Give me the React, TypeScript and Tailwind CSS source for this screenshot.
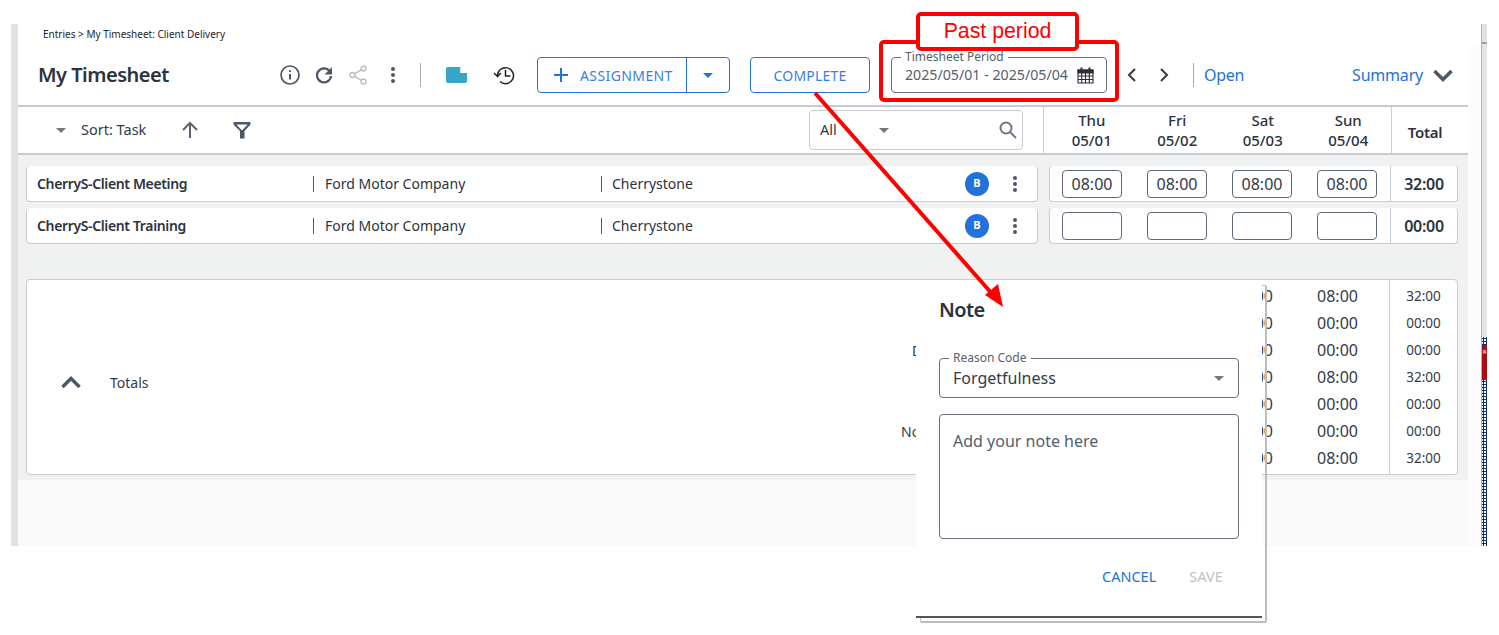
const F = "[font-family:'Noto_Sans','Open_Sans',sans-serif]";
function Dots({ c = "bg-[#4d5866]" }: { c?: string }) {
  return (
    <div className="flex flex-col items-center gap-[2px]">
      <span className={`h-[4px] w-[4px] rounded-full ${c}`} />
      <span className={`h-[4px] w-[4px] rounded-full ${c}`} />
      <span className={`h-[4px] w-[4px] rounded-full ${c}`} />
    </div>
  );
}
function Caret({ c = "#777" }: { c?: string }) {
  return (
    <svg width="10" height="5" viewBox="0 0 10 5"><path d="M0 0h10L5 5z" fill={c} /></svg>
  );
}
const days = [["Thu", "05/01"], ["Fri", "05/02"], ["Sat", "05/03"], ["Sun", "05/04"]];
function Row({ name, vals, total }: { name: string; vals: string[]; total: string }) {
  return (
    <div className="flex h-[36px] items-stretch pl-[8px] pr-[10px]">
      <div className="flex w-[1012px] items-center rounded-[4px] border-b border-r border-l border-[#c8ccd3] bg-white pl-[10px] text-[14px] text-[#2c3340]">
        <div className="w-[276px] font-semibold tracking-[-0.36px]">{name}</div>
        <div className="w-[288px] border-l border-[#555] pl-[11px] leading-[16px]">Ford Motor Company</div>
        <div className="flex-1 border-l border-[#555] pl-[10px] leading-[16px]">Cherrystone</div>
        <span className="flex h-[24px] w-[24px] items-center justify-center rounded-full bg-[#2272d9] text-[11px] font-bold text-white">B</span>
        <div className="ml-[18px] mr-[14px] flex w-[16px] justify-center"><Dots /></div>
      </div>
      <div className="ml-[11px] flex w-[409px] rounded-[4px] border-b border-r border-l border-[#c8ccd3] bg-white">
        <div className="flex flex-1 items-center gap-[25px] pl-[12px]">
          {vals.map((v, i) => (
            <div key={i} className="flex h-[28px] w-[60px] items-center justify-center rounded-[4px] border border-[#5f6b7a] text-[16px] text-[#333b47]">{v}</div>
          ))}
        </div>
        <div className="flex w-[67px] items-center justify-center border-l border-[#c8ccd3] text-[16px] font-semibold tracking-[-0.3px] text-[#2c3340]">{total}</div>
      </div>
    </div>
  );
}
const labels = ["", "", "D", "", "", "No", ""];
const indent = ["", "", "pl-[11px]", "", "", "", ""];
const totals = [["08:00", "08:00", "32:00"], ["00:00", "00:00", "00:00"], ["00:00", "00:00", "00:00"], ["08:00", "08:00", "32:00"], ["00:00", "00:00", "00:00"], ["00:00", "00:00", "00:00"], ["08:00", "08:00", "32:00"]];
export default function App() {
  return (
    <div className={`relative h-[635px] w-[1499px] overflow-hidden bg-white ${F}`}>
      <div className="flex h-[546px] pl-[11px] pt-[24px]">
        <div className="w-[7px] shrink-0 bg-[#e1e1e1]" />
        <div className="flex w-[1450px] shrink-0 flex-col bg-[#fafafa]">
          <div className="bg-white">
            <div className="pl-[25px] pt-[4px] text-[10px] leading-[13px] text-[#1c2430]">Entries &gt; My Timesheet: Client Delivery</div>
            <div className="flex h-[66px] items-center border-b-2 border-[#c6cad2] pl-[20px] pt-[4px]">
              <div className="w-[242px] text-[20px] font-semibold tracking-[-0.5px] text-[#2c3340]">My Timesheet</div>
              <svg width="20" height="20" viewBox="0 0 20 20" fill="none" stroke="#4d5866" strokeWidth="1.7"><circle cx="10" cy="10" r="9" /><path d="M10 9v5.500M10 5.200v1.800" strokeWidth="2" /></svg>
              <svg className="ml-[15px]" width="18" height="18" viewBox="0 0 18 18" fill="none" stroke="#4d5866" strokeWidth="2.2"><path d="M14.500 5A7 7 0 1 0 16 10" /><path d="M17 1v7.500H9.500z" fill="#4d5866" stroke="none" /></svg>
              <svg className="ml-[16px]" width="18" height="20" viewBox="0 0 18 20" fill="none" stroke="#b9bcc0" strokeWidth="1.4"><circle cx="14.500" cy="3.500" r="2.500" /><circle cx="3.500" cy="10" r="2.500" /><circle cx="14.500" cy="16.500" r="2.500" /><path d="M12.500 4.700 5.500 8.800M5.500 11.200l7 4.100" /></svg>
              <div className="ml-[24px]"><Dots /></div>
              <div className="ml-[25px] h-[24px] w-px bg-[#a6adb8]" />
              <svg className="ml-[25px]" width="21" height="16" viewBox="0 0 21 16"><path d="M2 0h12.500v6H21v8a2 2 0 0 1-2 2H2a2 2 0 0 1-2-2V2a2 2 0 0 1 2-2z" fill="#36a6c8" /><path d="M14.500 6V0L21 6z" fill="#fff" /></svg>
              <svg className="ml-[26px]" width="22" height="20" viewBox="0 0 22 20" fill="none" stroke="#222" strokeWidth="1.5"><path d="M4.500 11A8 8 0 1 1 7 16.500" /><path d="M1 8l3.500 3.500L8 8" /><path d="M12.500 5v6h5" /></svg>
              <div className="ml-[22px] flex h-[36px] w-[193px] items-stretch rounded-[4px] border border-[#2272d9] text-[#2272d9]">
                <div className="flex w-[149px] items-center border-r border-[#2272d9] pl-[15px]">
                  <svg width="16" height="16" viewBox="0 0 16 16" stroke="#2272d9" strokeWidth="2"><path d="M8 1v14M1 8h14" /></svg>
                  <span className="ml-[11px] text-[14px] tracking-[0.4px] text-[#3b80de]">ASSIGNMENT</span>
                </div>
                <div className="flex flex-1 items-center justify-center"><Caret c="#2272d9" /></div>
              </div>
              <div className="ml-[20px] flex h-[36px] w-[120px] items-center justify-center rounded-[4px] border border-[#2272d9] text-[14px] tracking-[0.2px] text-[#3b80de]">COMPLETE</div>
              <div className="relative ml-[21px] flex h-[36px] w-[216px] items-center rounded-[4px] border border-[#67707d] pl-[13px] text-[14.2px] text-[#555e6b]">
                <span className="absolute left-[9px] top-[-9px] bg-white px-[4px] text-[12px] leading-[16px] text-[#555e6b]">Timesheet Period</span>
                2025/05/01 - 2025/05/04
                <svg className="absolute right-[12px] top-[9px]" width="17" height="17" viewBox="0 0 17 17" fill="none" stroke="#2b2f36" strokeWidth="1.1"><path d="M1 3h15v13H1z" /><path d="M1 3h15v3H1z" fill="#2b2f36" /><path d="M1 9h15M1 12.500h15M4.700 6v10M8.500 6v10M12.300 6v10" /><path d="M4.500 0.500v3.500M12.500 0.500v3.500" strokeWidth="2" /></svg>
              </div>
              <svg className="ml-[20px]" width="10" height="14" viewBox="0 0 10 14" fill="none" stroke="#333b47" strokeWidth="2"><path d="M8 1 2 7l6 6" /></svg>
              <svg className="ml-[22px]" width="10" height="14" viewBox="0 0 10 14" fill="none" stroke="#333b47" strokeWidth="2"><path d="M2 1l6 6-6 6" /></svg>
              <div className="ml-[24px] h-[24px] w-px bg-[#a6adb8]" />
              <div className="ml-[10px] text-[16px] tracking-[-0.3px] text-[#2272d9]">Open</div>
              <div className="ml-[108px] text-[16px] tracking-[-0.2px] text-[#2272d9]">Summary</div>
              <svg className="ml-[10px]" width="20" height="13" viewBox="0 0 20 13" fill="none" stroke="#4d5866" strokeWidth="3.500"><path d="M1.500 2 10 10.500 18.500 2" /></svg>
            </div>
            <div className="flex h-[48px] items-stretch border-b-2 border-[#c6cad2] pl-[38px]">
              <div className="flex w-[753px] items-center">
                <Caret c="#777" />
                <span className="ml-[15px] text-[14.5px] text-[#333b47]">Sort: Task</span>
                <svg className="ml-[35px]" width="18" height="18" viewBox="0 0 18 18" fill="none" stroke="#5a6675" strokeWidth="2"><path d="M9 17V2M2 9l7-7 7 7" /></svg>
                <svg className="ml-[34px]" width="18" height="18" viewBox="0 0 18 18" fill="#4d5866"><path d="M.5 1h17v2.500l-6 6.500v7.500H7V10L.5 3.500zM3.500 3.500 8.500 9h1L14.500 3.500z" fillRule="evenodd" /></svg>
              </div>
              <div className="my-[3px] flex w-[214px] items-center justify-between rounded-[4px] border border-[#c8ccd3] pl-[10px] pr-[4px] text-[14.5px] text-[#333b47]">
                <span className="flex items-center"><span className="w-[59px]">All</span><Caret c="#777" /></span>
                <svg width="20" height="20" viewBox="0 0 20 20" fill="none" stroke="#6d7681" strokeWidth="2"><circle cx="8" cy="8" r="5.500" /><path d="M12 12l6 6" /></svg>
              </div>
              <div className="ml-[20px] flex w-[348px] border-l border-[#c8ccd3] pl-[5px] text-[15px] font-medium text-[#2c3340]">
                {days.map(d => (
                  <div key={d[0]} className="w-[85.500px] pt-[3px] text-center leading-[20px]"><div>{d[0]}</div><div>{d[1]}</div></div>
                ))}
              </div>
              <div className="flex flex-1 items-center justify-center border-l border-[#c8ccd3] pr-[10px] pt-[4px] text-[15px] font-semibold tracking-[-0.3px] text-[#2c3340]">Total</div>
            </div>
          </div>
          <div className="flex h-[325px] flex-col bg-[#f0f2f2] pt-[11px]">
            <Row name="CherryS-Client Meeting" vals={["08:00", "08:00", "08:00", "08:00"]} total="32:00" />
            <div className="h-[6px]" />
            <Row name="CherryS-Client Training" vals={["", "", "", ""]} total="00:00" />
            <div className="ml-[8px] mr-[10px] mt-[35px] flex h-[196px] rounded-[4px] border border-[#c8ccd3] bg-white text-[#333b47]">
              <div className="flex flex-1 items-center pl-[34px] pt-[10px]">
                <svg width="20" height="13" viewBox="0 0 20 13" fill="none" stroke="#4d5866" strokeWidth="3.500"><path d="M1.500 11 10 2.500 18.500 11" /></svg>
                <span className="ml-[29px] text-[14px]">Totals</span>
              </div>
              <div className="w-[309px] pt-[3px] text-[14px] leading-[27px]">
                {labels.map((l, i) => <div key={i} className={`h-[27px] ${indent[i]}`}>{l}</div>)}
              </div>
              <div className="w-[85px] pt-[3px] text-center text-[16px] leading-[27px]">
                {totals.map((t, i) => <div key={i} className="h-[27px]">{t[0]}</div>)}
              </div>
              <div className="mr-[9px] w-[85px] pt-[3px] text-center text-[16px] leading-[27px]">
                {totals.map((t, i) => <div key={i} className="h-[27px]">{t[1]}</div>)}
              </div>
              <div className="w-[68px] border-l border-[#c8ccd3] pt-[3px] text-center text-[13.500px] leading-[27px]">
                {totals.map((t, i) => <div key={i} className="h-[27px]">{t[2]}</div>)}
              </div>
            </div>
          </div>
        </div>
        <div className="flex w-[13px] shrink-0 flex-col">
          <div className="h-[22px] bg-white" />
          <div className="flex-1 bg-[#fcfcfc]" />
        </div>
        <div className="flex w-[6px] shrink-0 flex-col border-l border-[#b4b4b4]">
          <div className="h-[20px] border-b-2 border-[#a0a0a0] bg-[#e1e1e1]" />
          <div className="h-[293px] bg-[#e4e4e4]" />
          <div className="h-[8px] bg-[radial-gradient(#0f2f66_1.2px,transparent_1.2px)] bg-[length:3px_3px]" />
          <div className="flex h-[35px] justify-center bg-[#a80d12] pt-[2px] text-[8px] leading-[10px] text-white">×</div>
          <div className="flex-1 bg-[radial-gradient(#0f2f66_1.2px,transparent_1.2px)] bg-[length:3px_3px]" />
        </div>
      </div>
      <div className="absolute left-[920px] top-[285px] h-[338px] w-[347px] rounded-[2px] border-b-2 border-r-2 border-l border-t border-[#bdbdbd]" />
      <div className="absolute left-[916px] top-[280px] flex h-[338px] w-[346px] flex-col border-b-2 border-[#555] bg-white px-[23px] pt-[16px]">
        <div className="text-[20px] font-semibold leading-[27px] tracking-[-0.6px] text-[#2c3340]">Note</div>
        <div className="relative mt-[35px] flex h-[40px] w-[300px] items-center justify-between rounded-[4px] border border-[#67707d] pl-[13px] pr-[14px] text-[16px] text-[#333b47]">
          <span className="absolute left-[9px] top-[-9px] bg-white px-[4px] text-[12px] leading-[16px] text-[#555e6b]">Reason Code</span>
          Forgetfulness
          <Caret c="#777" />
        </div>
        <div className="mt-[16px] h-[125px] w-[300px] rounded-[4px] border border-[#67707d] pl-[13px] pt-[14px] text-[16px] text-[#555e6b]">Add your note here</div>
        <div className="mt-[27px] flex pl-[163px] text-[14.500px]">
          <span className="text-[#2272d9]">CANCEL</span>
          <span className="ml-[33px] text-[#c2c2c2]">SAVE</span>
        </div>
      </div>
      <svg className="pointer-events-none absolute left-0 top-0" width="1499" height="635" viewBox="0 0 1499 635" fill="none">
        <path d="M815 93 994 296" stroke="#f00" strokeWidth="4" />
        <path d="M1003 307 985 295 998 284z" fill="#f00" />
      </svg>
      <div className="absolute left-[879px] top-[40px] h-[62px] w-[240px] rounded-[5px] border-[4px] border-[#f00]" />
      <div className="absolute left-[916px] top-[12px] flex h-[39px] w-[163px] items-center justify-center rounded-[5px] border-[4px] border-[#f00] bg-white text-[21.300px] text-[#f00] [font-family:'Liberation_Sans',sans-serif]">Past period</div>
    </div>
  );
}
